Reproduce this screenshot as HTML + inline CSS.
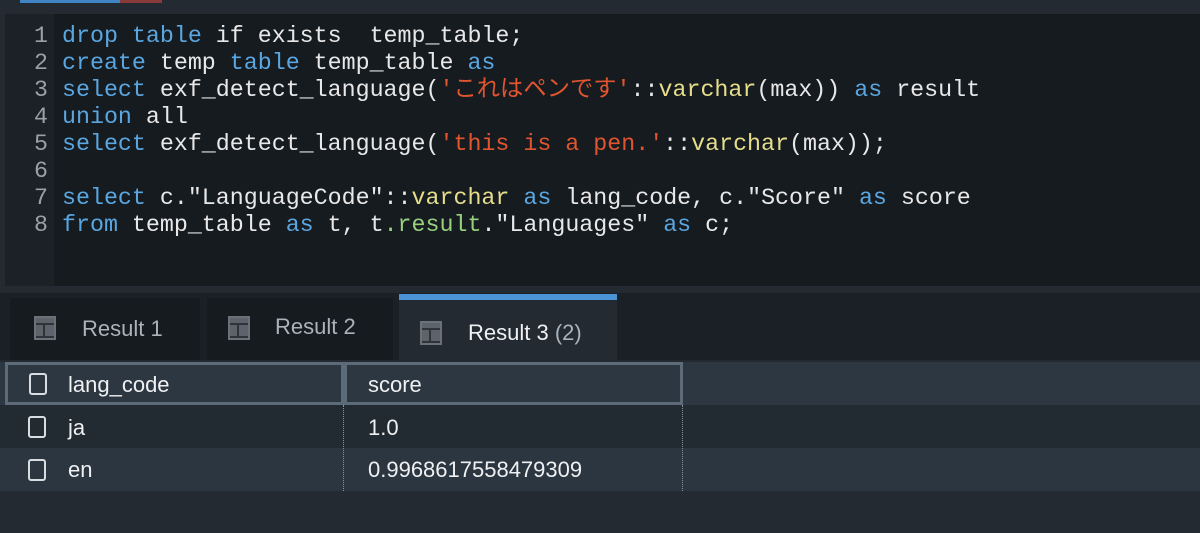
<!DOCTYPE html>
<html><head><meta charset="utf-8"><style>
*{margin:0;padding:0;box-sizing:border-box}
body{width:1200px;height:533px;background:#232a31;position:relative;overflow:hidden;font-family:"Liberation Sans",sans-serif}
.abs{position:absolute}
.code{font-family:"Liberation Mono","Noto Sans CJK JP",monospace;font-size:23.3px;color:#e8e8e8;white-space:pre;line-height:27px}
.k{color:#5aa6e0}.s{color:#e0552f}.y{color:#e6de8a}.g{color:#98d07e}
.ln{color:#9aa0a6;text-align:right;width:48px}
.tab{position:absolute;top:298px;height:62px;background:#161b20;color:#aab2ba;font-size:22px;line-height:62px}
.ic{position:absolute;width:22px;height:24px;border:2px solid #6a7179;background:#5c636a}
.ic:before{content:"";position:absolute;left:0;right:0;top:5px;height:11px;border-top:2px solid #2e343a;border-bottom:2px solid #2e343a}
.ic:after{content:"";position:absolute;left:7px;top:5px;bottom:0;border-left:2px solid #2e343a}
.cb{position:absolute;width:18px;height:22px;border:2px solid #d8dde2;border-radius:3px}
.t{position:absolute;color:#eef0f2;font-size:22px}
</style></head><body>
<div class="abs" style="left:20px;top:0;width:100px;height:3px;background:#3f85c6"></div>
<div class="abs" style="left:120px;top:0;width:42px;height:3px;background:#8a3a3a"></div>
<div class="abs" style="left:5px;top:14px;width:1195px;height:272px;background:#161b20"></div>
<div class="abs" style="left:5px;top:14px;width:49px;height:272px;background:#1c2127"></div>
<div class="abs code ln" style="left:0;top:23px">1
2
3
4
5
6
7
8</div>
<div class="abs code" style="left:62px;top:23px"><span class="k">drop table</span> if exists  temp_table;
<span class="k">create</span> temp <span class="k">table</span> temp_table <span class="k">as</span>
<span class="k">select</span> exf_detect_language(<span class="s">'これはペンです'</span>::<span class="y">varchar</span>(max)) <span class="k">as</span> result
<span class="k">union</span> all
<span class="k">select</span> exf_detect_language(<span class="s">'this is a pen.'</span>::<span class="y">varchar</span>(max));

<span class="k">select</span> c."LanguageCode"::<span class="y">varchar</span> <span class="k">as</span> lang_code, c."Score" <span class="k">as</span> score
<span class="k">from</span> temp_table <span class="k">as</span> t, t<span class="g">.result</span>."Languages" <span class="k">as</span> c;</div>
<div class="abs" style="left:0;top:293px;width:1200px;height:67px;background:#1b2027"></div>
<div class="tab" style="left:10px;width:190px"><div class="ic" style="left:24px;top:18px"></div><span style="position:absolute;left:72px">Result 1</span></div>
<div class="tab" style="left:207px;width:186px"><div class="ic" style="left:21px;top:18px"></div><span style="position:absolute;left:68px;top:-2px">Result 2</span></div>
<div class="abs" style="left:399px;top:294px;width:218px;height:66px;background:#232a31;border-top:6px solid #4a93d4"><div class="ic" style="left:21px;top:21px"></div><span style="position:absolute;left:69px;top:20px;color:#eef0f2;font-size:22px">Result 3 <span style="color:#aab2ba">(2)</span></span></div>
<div class="abs" style="left:0;top:362px;width:1200px;height:43px;background:#2d3741"></div>
<div class="abs" style="left:5px;top:362px;width:339px;height:43px;border:3px solid #5d6b78"></div>
<div class="abs" style="left:344px;top:362px;width:339px;height:43px;border:3px solid #5d6b78"></div>
<div class="abs" style="left:0;top:405px;width:1200px;height:43px;background:#222a32"></div>
<div class="abs" style="left:0;top:448px;width:1200px;height:43px;background:#2c3640"></div>
<div class="abs" style="left:343px;top:405px;height:86px;border-left:1px dotted #8a949e"></div>
<div class="abs" style="left:682px;top:405px;height:86px;border-left:1px dotted #8a949e"></div>
<div class="cb" style="left:29px;top:373px"></div><div class="t" style="left:68px;top:372px">lang_code</div>
<div class="t" style="left:368px;top:372px">score</div>
<div class="cb" style="left:28px;top:416px"></div><div class="t" style="left:68px;top:415px">ja</div>
<div class="t" style="left:368px;top:415px">1.0</div>
<div class="cb" style="left:28px;top:459px"></div><div class="t" style="left:68px;top:457px">en</div>
<div class="t" style="left:368px;top:457px">0.9968617558479309</div>
</body></html>
